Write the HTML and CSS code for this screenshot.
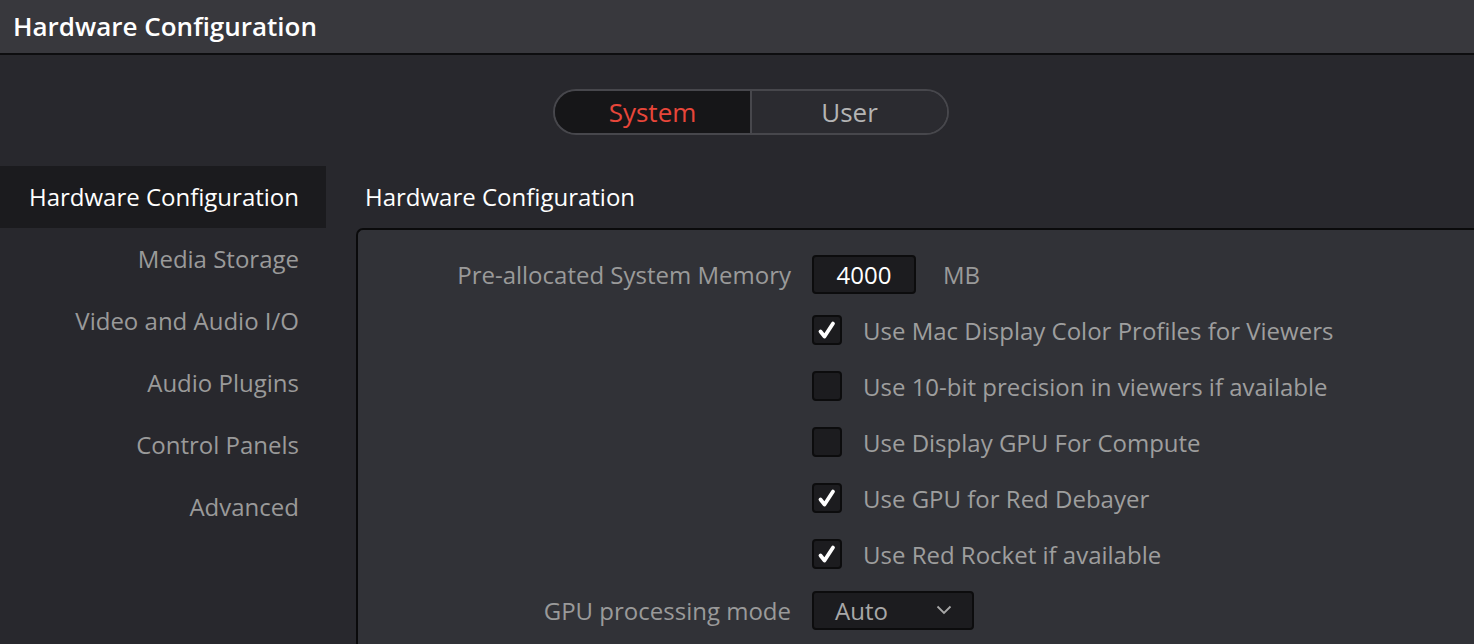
FILE: index.html
```html
<!DOCTYPE html>
<html>
<head>
<meta charset="utf-8">
<link rel="stylesheet" href="styles.css">
</head>
<body>
<header class="titlebar">Hardware Configuration</header>
<div class="tabs-row">
  <div class="segmented">
    <div class="seg seg-active">System</div>
    <div class="seg">User</div>
  </div>
</div>
<div class="main">
  <nav class="sidebar">
    <div class="nav-item nav-active">Hardware Configuration</div>
    <div class="nav-item">Media Storage</div>
    <div class="nav-item">Video and Audio I/O</div>
    <div class="nav-item">Audio Plugins</div>
    <div class="nav-item">Control Panels</div>
    <div class="nav-item">Advanced</div>
  </nav>
  <section class="content">
    <h2 class="content-title">Hardware Configuration</h2>
    <div class="panel">
      <div class="row">
        <div class="label">Pre-allocated System Memory</div>
        <div class="control">
          <div class="numbox">4000</div>
          <span class="unit">MB</span>
        </div>
      </div>
      <div class="row">
        <div class="label"></div>
        <div class="control">
          <span class="checkbox"><svg viewBox="0 0 30 30" width="30" height="30"><path d="M8.5 16.5 L12.5 21.5 L21 8.5" fill="none" stroke="#fff" stroke-width="3.8" stroke-linecap="round" stroke-linejoin="round"/></svg></span>
          <span class="check-label">Use Mac Display Color Profiles for Viewers</span>
        </div>
      </div>
      <div class="row">
        <div class="label"></div>
        <div class="control">
          <span class="checkbox"></span>
          <span class="check-label">Use 10-bit precision in viewers if available</span>
        </div>
      </div>
      <div class="row">
        <div class="label"></div>
        <div class="control">
          <span class="checkbox"></span>
          <span class="check-label">Use Display GPU For Compute</span>
        </div>
      </div>
      <div class="row">
        <div class="label"></div>
        <div class="control">
          <span class="checkbox"><svg viewBox="0 0 30 30" width="30" height="30"><path d="M8.5 16.5 L12.5 21.5 L21 8.5" fill="none" stroke="#fff" stroke-width="3.8" stroke-linecap="round" stroke-linejoin="round"/></svg></span>
          <span class="check-label">Use GPU for Red Debayer</span>
        </div>
      </div>
      <div class="row">
        <div class="label"></div>
        <div class="control">
          <span class="checkbox"><svg viewBox="0 0 30 30" width="30" height="30"><path d="M8.5 16.5 L12.5 21.5 L21 8.5" fill="none" stroke="#fff" stroke-width="3.8" stroke-linecap="round" stroke-linejoin="round"/></svg></span>
          <span class="check-label">Use Red Rocket if available</span>
        </div>
      </div>
      <div class="row">
        <div class="label">GPU processing mode</div>
        <div class="control">
          <div class="dropdown">
            <span>Auto</span>
            <svg class="chev" viewBox="0 0 16 10" width="16" height="10"><path d="M1.5 1.5 L8 8 L14.5 1.5" fill="none" stroke="#a8a8a8" stroke-width="1.8"/></svg>
          </div>
        </div>
      </div>
    </div>
  </section>
</div>
</body>
</html>
```
FILE: styles.css
```css
* { box-sizing: border-box; }
html, body {
  margin: 0;
  padding: 0;
  height: 100%;
  overflow: hidden;
}
body {
  background: #28282d;
  font-family: "Open Sans", "DejaVu Sans", sans-serif;
  color: #9c9c9c;
  width: 1474px;
  height: 644px;
}
.titlebar {
  height: 55px;
  background: #38383d;
  border-bottom: 2px solid #0d0d0f;
  color: #ffffff;
  font-weight: 600;
  font-size: 26px;
  line-height: 53px;
  padding-left: 13px;
}
.tabs-row {
  padding-top: 34px;
  padding-left: 553px;
  height: 111px;
}
.segmented {
  display: flex;
  width: 396px;
  height: 46px;
  border: 2px solid #47474c;
  border-radius: 23px;
  overflow: hidden;
}
.seg {
  flex: 1;
  display: flex;
  align-items: center;
  justify-content: center;
  font-size: 26px;
  color: #b4b4b4;
  background: #2b2b30;
}
.seg-active {
  background: #161618;
  color: #e8463a;
  border-right: 2px solid #47474c;
}
.main {
  display: flex;
}
.sidebar {
  width: 326px;
  flex: none;
}
.nav-item {
  height: 62px;
  line-height: 62px;
  text-align: right;
  padding-right: 27px;
  font-size: 24px;
  color: #9a9a9a;
}
.nav-active {
  background: #1b1b1e;
  color: #ffffff;
}
.content {
  flex: 1;
  padding-left: 30px;
}
.content-title {
  margin: 0;
  height: 62px;
  line-height: 62px;
  font-weight: 400;
  font-size: 24px;
  color: #ffffff;
  padding-left: 9px;
}
.panel {
  background: #313237;
  border-top: 2px solid #0a0a0b;
  border-left: 2px solid #0a0a0b;
  border-top-left-radius: 7px;
  padding-top: 16px;
  height: 440px;
}
.row {
  display: flex;
  align-items: center;
  height: 56px;
}
.label {
  width: 433px;
  text-align: right;
  font-size: 24px;
  color: #9a9a9a;
}
.control {
  display: flex;
  align-items: center;
  margin-left: 21px;
}
.numbox {
  width: 104px;
  height: 39px;
  background: #1c1c1f;
  border: 2px solid #0c0c0d;
  border-radius: 4px;
  color: #ffffff;
  font-size: 24px;
  display: flex;
  align-items: center;
  justify-content: center;
}
.unit {
  margin-left: 27px;
  font-size: 24px;
  color: #9a9a9a;
}
.checkbox {
  width: 30px;
  height: 30px;
  background: #1c1c1f;
  border: 2px solid #0c0c0d;
  border-radius: 4px;
  display: flex;
  align-items: center;
  justify-content: center;
  flex: none;
}
.checkbox svg {
  display: block;
  margin: -2px;
}
.check-label {
  margin-left: 21px;
  font-size: 24px;
  color: #9e9e9e;
}
.dropdown {
  width: 162px;
  height: 39px;
  background: #1c1c1f;
  border: 2px solid #0c0c0d;
  border-radius: 4px;
  display: flex;
  align-items: center;
  justify-content: space-between;
  padding-left: 21px;
  padding-right: 20px;
  font-size: 24px;
  color: #a8a8a8;
}
.chev { display: block; }
```
